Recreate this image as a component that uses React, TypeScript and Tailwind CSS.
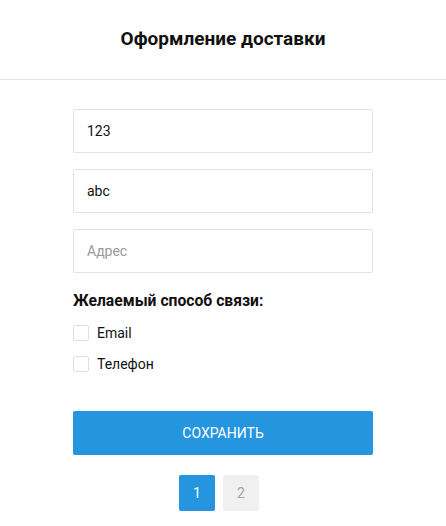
import { useState } from "react";

function Checkbox({ label }: { label: string }) {
  const [checked, setChecked] = useState(false);
  return (
    <label className="flex h-5 items-center gap-2 text-[14px] text-[#111]">
      <input
        type="checkbox"
        checked={checked}
        onChange={() => setChecked(!checked)}
        className="h-4 w-4 appearance-none rounded-[2px] border border-[#dcdfe6] bg-white checked:bg-[#2595e0]"
      />
      {label}
    </label>
  );
}

export default function App() {
  const [page, setPage] = useState(1);
  return (
    <div className="min-h-[526px] bg-white font-['Roboto',sans-serif] text-[#111]">
      <header className="flex h-20 items-center justify-center border-b border-[#e2e4ea]">
        <h1 className="text-[19px] font-bold">Оформление доставки</h1>
      </header>
      <form className="mx-auto flex w-[300px] flex-col pt-[29px]">
        <div className="flex flex-col gap-4">
          <input
            defaultValue="123"
            className="h-11 rounded-[2px] border border-[#e0e2e8] px-[13px] text-[14px] outline-none"
          />
          <input
            defaultValue="abc"
            className="h-11 rounded-[2px] border border-[#e0e2e8] px-[13px] text-[14px] outline-none"
          />
          <input
            placeholder="Адрес"
            className="h-11 rounded-[2px] border border-[#e0e2e8] px-[13px] text-[14px] outline-none placeholder:text-[#999]"
          />
        </div>
        <p className="mt-4 text-[15.7px] font-bold leading-6">Желаемый способ связи:</p>
        <div className="mt-[10px] flex flex-col gap-[11px]">
          <Checkbox label="Email" />
          <Checkbox label="Телефон" />
        </div>
        <button
          type="button"
          className="mt-[37px] h-11 rounded-[2px] bg-[#2595e0] text-[14px] text-white"
        >
          СОХРАНИТЬ
        </button>
        <div className="mt-5 flex justify-center">
          {[1, 2].map((n) => (
            <button
              key={n}
              type="button"
              onClick={() => setPage(n)}
              className={
                n === page
                  ? "mr-2 h-9 w-9 rounded-[2px] bg-[#2595e0] text-[14px] text-white"
                  : "mr-2 h-9 w-9 rounded-[2px] bg-[#f0f0f0] text-[14px] text-[#a3a3b3]"
              }
            >
              {n}
            </button>
          ))}
        </div>
      </form>
    </div>
  );
}
